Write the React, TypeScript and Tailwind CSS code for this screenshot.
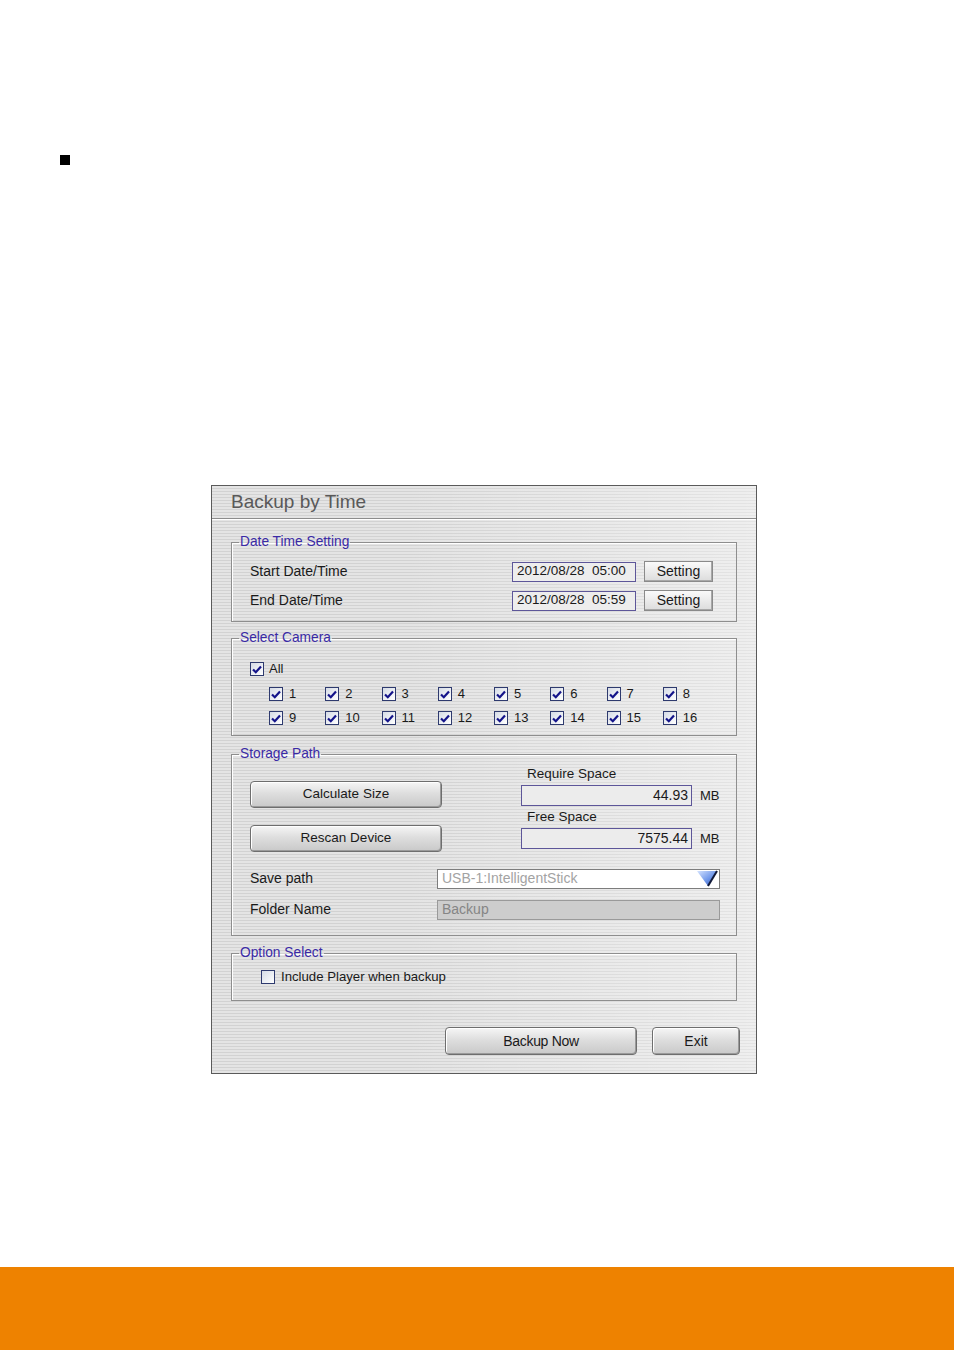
import React from "react"

const cameras = Array.from({ length: 16 }, (_, i) => i + 1)

const Check = ({ checked }: { checked: boolean }) => (
  <span className="flex h-[14px] w-[14px] shrink-0 items-center justify-center border border-[#2e3a6e] bg-[linear-gradient(135deg,#d5dbe6,#ffffff)]">
    {checked && (
      <svg width="10" height="9" viewBox="0 0 10 9">
        <path d="M1 4.5 L3.8 7.2 L9 1.5" fill="none" stroke="#14148a" strokeWidth="2.2" />
      </svg>
    )}
  </span>
)

const Group = ({ title, className, children }: { title: string; className?: string; children: React.ReactNode }) => (
  <fieldset className={`border border-[#8e8e8e] shadow-[inset_1px_1px_0_#ffffff] ${className ?? ""}`}>
    <legend className="ml-[7px] px-[1px] text-[13.75px] leading-[16px] text-[#3a2aa6]">{title}</legend>
    {children}
  </fieldset>
)

const BigButton = ({ label, className }: { label: string; className: string }) => (
  <button className={`flex items-center justify-center rounded-[4px] border border-[#6e6e6e] bg-[linear-gradient(to_bottom,#f6f6f6,#dedede_45%,#c9c9c9)] text-[#1a1a1a] shadow-[inset_1px_1px_0_#ffffff,inset_-1px_-1px_0_#9a9a9a] ${className}`}>
    {label}
  </button>
)

const SettingButton = () => (
  <button className="ml-[8px] flex h-[21px] w-[69px] items-center justify-center border border-[#8a8a8a] bg-[linear-gradient(to_bottom,#fafafa,#dcdcdc)] text-[14px] text-[#1a1a1a] shadow-[inset_-1px_-1px_0_#a8a8a8]">
    Setting
  </button>
)

export default function App() {
  return (
    <div className="flex min-h-[1350px] w-[954px] flex-col bg-white font-['Liberation_Sans',Arial,sans-serif] text-[#1a1a1a]">
      <div className="ml-[60px] mt-[155px] h-[10px] w-[10px] bg-black" />

      <div className="ml-[211px] mt-[320px] h-[589px] w-[546px] border border-[#5a5a5a] bg-[linear-gradient(to_right,rgba(255,255,255,0)_35%,rgba(255,255,255,0.4)),repeating-linear-gradient(to_bottom,#e4e4e4_0_2px,#d2d2d2_2px_3px)]">
        <div className="flex h-[33px] items-center border-b border-[#8c8c8c] pl-[19px] text-[19px] text-[#595959] shadow-[0_1px_0_#ffffff]">
          Backup by Time
        </div>

        <div className="px-[19px]">
          <Group title="Date Time Setting" className="mt-[15px] pb-[10px] pt-[11px]">
            <div className="flex flex-col gap-[8px] pl-[18px] pr-[23px] text-[14px]">
              {[
                ["Start Date/Time", "2012/08/28  05:00"],
                ["End Date/Time", "2012/08/28  05:59"],
              ].map(([label, value]) => (
                <div key={label} className="flex items-center">
                  <span className="flex-1">{label}</span>
                  <span className="flex h-[20px] w-[124px] items-center whitespace-pre border border-[#5d5699] bg-[#ededed] pl-[4px] text-[13.5px]">
                    {value}
                  </span>
                  <SettingButton />
                </div>
              ))}
            </div>
          </Group>

          <Group title="Select Camera" className="mt-[8px] pb-[10px] pt-[16px]">
            <div className="flex h-[14px] items-center gap-[5px] pl-[18px] text-[13px]">
              <Check checked />
              <span>All</span>
            </div>
            <div className="ml-[37px] mt-[11px] grid w-[450px] grid-cols-8 gap-y-[10px] text-[13px]">
              {cameras.map((n) => (
                <div key={n} className="flex h-[14px] items-center gap-[6px]">
                  <Check checked />
                  <span>{n}</span>
                </div>
              ))}
            </div>
          </Group>

          <Group title="Storage Path" className="mt-[10px] pb-[15px] pt-[4px]">
            <div className="flex pl-[18px]">
              <div className="flex w-[192px] flex-col gap-[17px] pt-[15px]">
                <BigButton label="Calculate Size" className="h-[27px] w-[192px] text-[13.5px]" />
                <BigButton label="Rescan Device" className="h-[27px] w-[192px] text-[13.5px]" />
              </div>
              <div className="ml-[79px] flex flex-col text-[13.5px]">
                <span className="pl-[6px] leading-[16px]">Require Space</span>
                <div className="mt-[3px] flex items-center">
                  <span className="flex h-[21px] w-[171px] items-center justify-end border border-[#5d5699] bg-[#ececec] pr-[3px] text-[14px]">44.93</span>
                  <span className="ml-[8px] text-[13px]">MB</span>
                </div>
                <span className="mt-[3px] pl-[6px] leading-[16px]">Free Space</span>
                <div className="mt-[3px] flex items-center">
                  <span className="flex h-[21px] w-[171px] items-center justify-end border border-[#5d5699] bg-[#ececec] pr-[3px] text-[14px]">7575.44</span>
                  <span className="ml-[8px] text-[13px]">MB</span>
                </div>
              </div>
            </div>

            <div className="mt-[16px] flex flex-col gap-[10px] pl-[18px] text-[14px]">
              <div className="flex items-center">
                <span className="w-[187px]">Save path</span>
                <div className="flex h-[20px] w-[283px] items-center border border-[#7d7d7d] bg-white pl-[4px] text-[#a3a3a3]">
                  <span className="flex-1">USB-1:IntelligentStick</span>
                  <svg width="22" height="17" viewBox="0 0 22 17" className="mr-[1px]">
                    <defs>
                      <linearGradient id="tri" x1="0" y1="0" x2="1" y2="1">
                        <stop offset="0" stopColor="#d6e4ff" />
                        <stop offset="0.55" stopColor="#6f97ea" />
                        <stop offset="1" stopColor="#2c4fb0" />
                      </linearGradient>
                    </defs>
                    <path d="M1 1 L21 1 L12 16 Z" fill="url(#tri)" />
                    <path d="M21 1 L12 16" stroke="#111a3a" strokeWidth="2" />
                  </svg>
                </div>
              </div>
              <div className="flex items-center">
                <span className="w-[187px]">Folder Name</span>
                <span className="flex h-[20px] w-[283px] items-center border border-[#9a9a9a] bg-[#cdcdcd] pl-[4px] text-[#858585]">
                  Backup
                </span>
              </div>
            </div>
          </Group>

          <Group title="Option Select" className="mt-[9px] pb-[16px] pt-[9px]">
            <div className="flex h-[14px] items-center gap-[6px] pl-[29px] text-[13.2px]">
              <Check checked={false} />
              <span>Include Player when backup</span>
            </div>
          </Group>

          <div className="mt-[26px] flex justify-end gap-[15px]">
            <BigButton label="Backup Now" className="h-[28px] w-[192px] text-[14px] tracking-[-0.3px]" />
            <BigButton label="Exit" className="-mr-[3px] h-[28px] w-[88px] text-[14px]" />
          </div>
        </div>
      </div>

      <div className="mt-auto h-[83px] w-full bg-[#ee8200]" />
    </div>
  )
}
